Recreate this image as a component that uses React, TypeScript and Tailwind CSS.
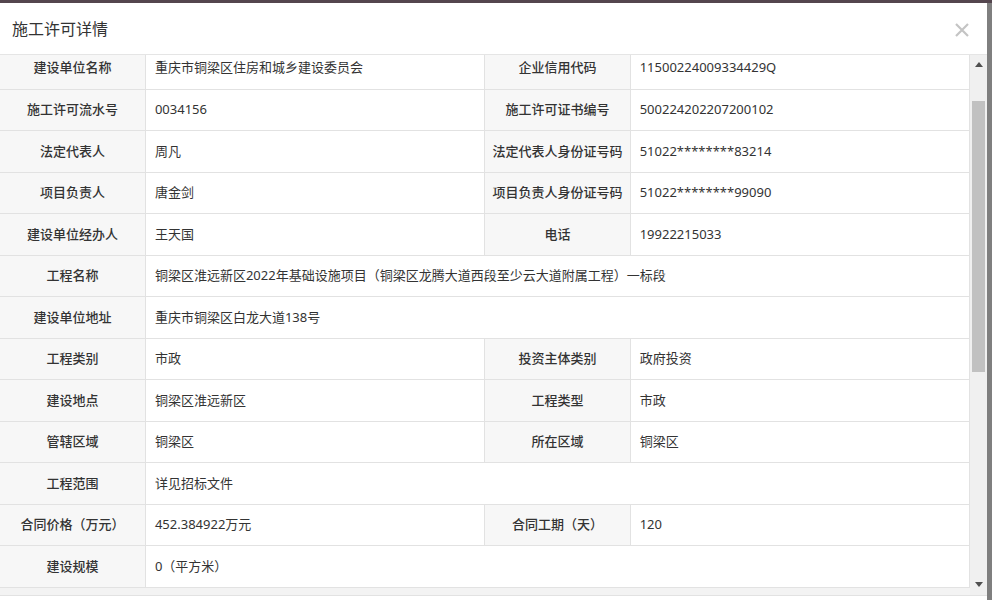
import React from "react"

type Row =
  | { kind: "pair"; l1: string; v1: string; l2: string; v2: string }
  | { kind: "wide"; l1: string; v1: string }

const rows: Row[] = [
  { kind: "pair", l1: "建设单位名称", v1: "重庆市铜梁区住房和城乡建设委员会", l2: "企业信用代码", v2: "11500224009334429Q" },
  { kind: "pair", l1: "施工许可流水号", v1: "0034156", l2: "施工许可证书编号", v2: "500224202207200102" },
  { kind: "pair", l1: "法定代表人", v1: "周凡", l2: "法定代表人身份证号码", v2: "51022********83214" },
  { kind: "pair", l1: "项目负责人", v1: "唐金剑", l2: "项目负责人身份证号码", v2: "51022********99090" },
  { kind: "pair", l1: "建设单位经办人", v1: "王天国", l2: "电话", v2: "19922215033" },
  { kind: "wide", l1: "工程名称", v1: "铜梁区淮远新区2022年基础设施项目（铜梁区龙腾大道西段至少云大道附属工程）一标段" },
  { kind: "wide", l1: "建设单位地址", v1: "重庆市铜梁区白龙大道138号" },
  { kind: "pair", l1: "工程类别", v1: "市政", l2: "投资主体类别", v2: "政府投资" },
  { kind: "pair", l1: "建设地点", v1: "铜梁区淮远新区", l2: "工程类型", v2: "市政" },
  { kind: "pair", l1: "管辖区域", v1: "铜梁区", l2: "所在区域", v2: "铜梁区" },
  { kind: "wide", l1: "工程范围", v1: "详见招标文件" },
  { kind: "pair", l1: "合同价格（万元）", v1: "452.384922万元", l2: "合同工期（天）", v2: "120" },
  { kind: "wide", l1: "建设规模", v1: "0（平方米）" },
]

const labelCls = "h-[41.5px] border-r border-b border-[#e2e2e2] bg-[#f7f7f7] text-center font-medium text-[#333]"
const valueCls = "h-[41.5px] border-r border-b border-[#e2e2e2] px-[9px] text-left text-[#333]"

function Scrollbar() {
  return (
    <div className="flex w-[17px] flex-col bg-[#f0f0f0]">
      <div className="flex h-[17px] items-center justify-center pt-[2px]">
        <svg width="8" height="5" viewBox="0 0 8 5">
          <path d="M0 5 L4 0 L8 5 Z" fill="#505050" />
        </svg>
      </div>
      <div className="flex-1 px-[2px]">
        <div className="mt-[29px] h-[271px] bg-[#c1c1c1]" />
      </div>
      <div className="flex h-[17px] items-center justify-center pb-[4px]">
        <svg width="8" height="5" viewBox="0 0 8 5">
          <path d="M0 0 L8 0 L4 5 Z" fill="#505050" />
        </svg>
      </div>
    </div>
  )
}

export default function App() {
  return (
    <div
      className="flex h-[600px] w-[992px] flex-col overflow-hidden bg-[#7f7f7f]"
      style={{ fontFamily: '"Noto Sans", "Noto Sans CJK SC", sans-serif' }}
    >
      <div className="h-[3px] bg-[#54464e]" />
      <div className="flex flex-1">
        <div className="flex w-[987px] flex-col bg-white">
          <div className="flex h-[52px] items-center justify-between border-b border-[#e5e5e5] pl-3 pr-[17px]">
            <h3 className="text-[16px] text-[#333]">施工许可详情</h3>
            <svg width="16" height="16" viewBox="0 0 16 16" className="mt-[3px]">
              <path d="M2 2 L14 14 M14 2 L2 14" stroke="#c4c4c4" strokeWidth="2.2" />
            </svg>
          </div>
          <div className="flex h-[540px]">
            <div className="flex-1 overflow-hidden">
              <table className="-mt-[7.5px] w-[970px] table-fixed border-collapse text-[13px]">
                <colgroup>
                  <col className="w-[15%]" />
                  <col className="w-[35%]" />
                  <col className="w-[15%]" />
                  <col className="w-[35%]" />
                </colgroup>
                <tbody>
                  {rows.map((r) =>
                    r.kind === "pair" ? (
                      <tr key={r.l1}>
                        <td className={labelCls}>{r.l1}</td>
                        <td className={valueCls}>{r.v1}</td>
                        <td className={labelCls}>{r.l2}</td>
                        <td className={valueCls}>{r.v2}</td>
                      </tr>
                    ) : (
                      <tr key={r.l1}>
                        <td className={labelCls}>{r.l1}</td>
                        <td className={valueCls} colSpan={3}>
                          {r.v1}
                        </td>
                      </tr>
                    ),
                  )}
                </tbody>
              </table>
              <div className="h-[8px] bg-[#f3f3f3]" />
            </div>
            <Scrollbar />
          </div>
          <div className="flex-1 border-t border-[#e2e2e2] bg-white" />
        </div>
        <div className="flex-1 bg-[#7f7f7f]" />
      </div>
    </div>
  )
}
